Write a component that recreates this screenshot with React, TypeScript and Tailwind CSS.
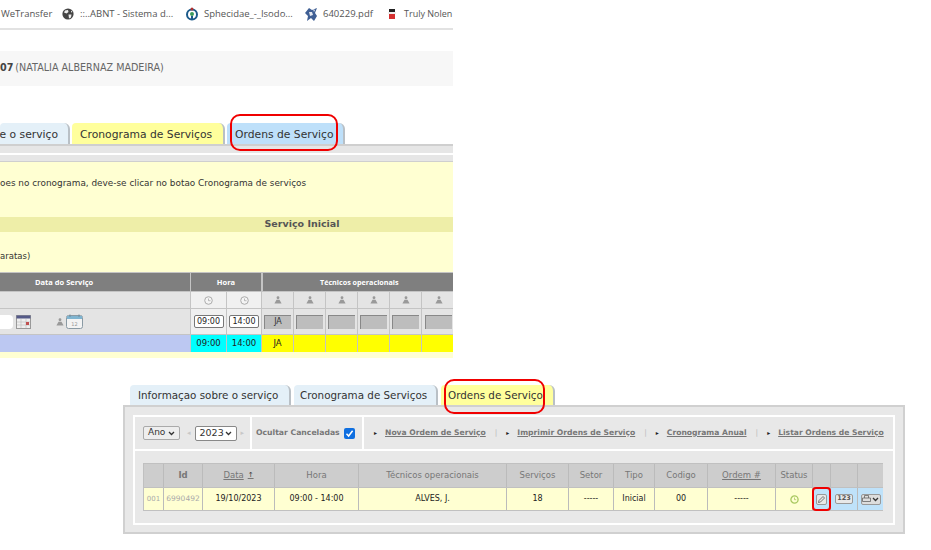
import type { ReactNode } from "react";

const verdana = "font-['DejaVu_Sans',sans-serif]";

const Globe = () => (
  <svg width="12" height="12" viewBox="0 0 12 12" className="shrink-0">
    <circle cx="6" cy="6" r="5.6" fill="#444" />
    <path d="M3 2.5 L6 2 L6.5 4 L4.5 5.5 L2 4.5 Z M6.5 6.5 L9.5 6.5 L9 9.5 L7 10.5 Z M9 2.5 L10.5 4 L9 4.5 Z" fill="#eee" />
  </svg>
);

const Wiki = () => (
  <svg width="14" height="14" viewBox="0 0 14 14" className="shrink-0">
    <circle cx="7" cy="7.5" r="5" fill="none" stroke="#1c5a8a" strokeWidth="2" />
    <circle cx="7" cy="7" r="2" fill="#3a9a5a" />
    <circle cx="7" cy="2" r="1.5" fill="#b03030" />
    <rect x="6" y="9" width="2" height="4" fill="#1c5a8a" />
  </svg>
);

const PdfIcon = () => (
  <svg width="14" height="15" viewBox="0 0 14 15" className="shrink-0">
    <path d="M1 6 L5 1 L8 3 L13 1 L11 6 L13 9 L10 14 L7 11 L3 14 L4 9 Z" fill="#3f5f94" />
    <path d="M5 5 L8 5 L9 8 L6 9 Z M9 2 L11 3 L10 5 Z" fill="#e4e8f0" />
  </svg>
);

const Truly = () => (
  <svg width="8" height="11" viewBox="0 0 8 11" className="shrink-0">
    <rect x="1" y="0" width="6" height="3" fill="#222" />
    <rect x="0" y="3" width="8" height="2" fill="#eee" />
    <rect x="1" y="5" width="6" height="5" fill="#d43030" />
  </svg>
);

const Clock = () => (
  <svg width="9" height="9" viewBox="0 0 9 9">
    <circle cx="4.5" cy="4.5" r="3.8" fill="#f4f4f4" stroke="#aaa" />
    <path d="M4.5 2.5 V4.7 H6.5" fill="none" stroke="#aaa" strokeWidth="0.8" />
  </svg>
);

const Person = ({ color = "#999" }: { color?: string }) => (
  <svg width="8" height="8" viewBox="0 0 9 9">
    <circle cx="4.5" cy="2" r="1.6" fill={color} />
    <path d="M2.8 4.2 H6.2 L8.5 8.5 H0.5 Z" fill={color} />
  </svg>
);

const Tab = ({ w, bg, children, className = "" }: { w: string; bg: string; children: ReactNode; className?: string }) => (
  <div className={`${w} ${bg} ${className} h-full shrink-0 rounded-tr-md rounded-tl-sm border-r-2 border-[#b9c0c6] flex items-center whitespace-nowrap overflow-hidden text-[#333]`}>
    {children}
  </div>
);

const techCells = [0, 1, 2, 3, 4, 5];

function TopBlock() {
  return (
    <div className={`w-[453px] overflow-hidden ${verdana}`}>
      <div className="h-[30px] border-b-2 border-[#e2e2e2] flex items-center font-['Open_Sans',sans-serif] text-[9.5px] text-[#555] whitespace-nowrap">
        <span className="ml-px w-[61px] shrink-0">WeTransfer</span>
        <Globe />
        <span className="ml-[6px] w-[105px] shrink-0">::..ABNT - Sistema d...</span>
        <Wiki />
        <span className="ml-[5px] w-[100px] shrink-0">Sphecidae_-_Isodo...</span>
        <PdfIcon />
        <span className="ml-[5px] w-[65px] shrink-0">640229.pdf</span>
        <Truly />
        <span className="ml-2 shrink-0 text-[9px]">Truly Nolen</span>
      </div>

      <div className="mt-[21px] h-[35px] bg-[#f7f7f7] flex items-center text-[9.6px] text-[#666]">
        <b className="text-[#444]">07</b>
        <span className="ml-[2px]">(NATALIA ALBERNAZ MADEIRA)</span>
      </div>

      <div className="mt-[37px] h-[21px] flex gap-[2px] text-[10.75px]">
        <Tab w="w-[70px]" bg="bg-[#e4f0f8]" className="justify-end pr-[10px] pt-[4px]">e o serviço</Tab>
        <Tab w="w-[153px]" bg="bg-[#ffff9c]" className="pl-2 pt-[4px]">Cronograma de Serviços</Tab>
        <Tab w="w-[118px]" bg="bg-[#bee0fa]" className="pl-2 pt-[4px]">Ordens de Serviço</Tab>
      </div>

      <div className="h-[18px] bg-[#e6e6e6] border-t-2 border-b border-[#cfcfcf] flex flex-col">
        <div className="h-[7px]" />
        <div className="h-[2px] bg-white" />
      </div>

      <div className="h-[196px] bg-[#ffffd2] text-[#333] text-[8.9px]">
        <div className="pt-[15px] h-[55px]">oes no cronograma, deve-se clicar no botao Cronograma de serviços</div>
        <div className="h-[15px] bg-[#eeeea8] flex items-center justify-center pl-[151px] text-[9.5px] font-bold text-[#555]">
          <span>Serviço Inicial</span>
        </div>
        <div className="pt-[18px] h-[40px] text-[8.5px]">aratas)</div>

        <div className="grid grid-cols-[190px_35px_34px_31px_31px_31px_31px_31px_33px] gap-x-px bg-[#c4c4c4] w-[453px] text-[8px] border-t border-[#c4c4c4]">
          <div className="h-[18px] pt-px bg-[#7f7f7f] text-white font-bold font-['Open_Sans',sans-serif] flex items-center pl-[35px] text-[7.5px]">Data do Serviço</div>
          <div className="col-span-2 h-[18px] pt-px bg-[#7f7f7f] text-white font-bold font-['Open_Sans',sans-serif] flex items-center justify-center text-[7.5px]">Hora</div>
          <div className="col-span-6 h-[18px] pt-px bg-[#7f7f7f] text-white font-bold font-['Open_Sans',sans-serif] flex items-center pl-[57px] text-[7.2px] border-l border-[#c4c4c4]">Técnicos operacionais</div>

          <div className="h-[16px] mt-px bg-[#e4e4e4]" />
          <div className="h-[16px] mt-px bg-[#f0f0f0] flex items-center justify-center"><Clock /></div>
          <div className="h-[16px] mt-px bg-[#f0f0f0] flex items-center justify-center"><Clock /></div>
          {techCells.map((c) => (
            <div key={c} className="h-[16px] mt-px bg-[#e4e4e4] flex items-center justify-center"><Person /></div>
          ))}

          <div className="h-[25px] mt-px bg-[#e4e4e4] flex items-center">
            <div className="w-[13px] h-[14px] bg-white rounded-r-sm" />
            <svg width="15" height="14" viewBox="0 0 15 14" className="ml-[3px]">
              <rect x="0.5" y="0.5" width="14" height="13" fill="#eee" stroke="#999" />
              <rect x="0.5" y="0.5" width="14" height="3" fill="#555a88" />
              <path d="M5 4 V13 M10 4 V13 M1 7 H14 M1 10 H14" stroke="#bbb" strokeWidth="0.6" />
              <rect x="10" y="7" width="3" height="3" fill="#c05050" />
            </svg>
            <span className="ml-[25px]"><Person /></span>
            <svg width="17" height="15" viewBox="0 0 17 15" className="ml-[2px]">
              <rect x="0.5" y="1.5" width="16" height="13" rx="2" fill="#f3f3f3" stroke="#8a9aa4" />
              <rect x="1" y="2" width="15" height="3" fill="#7fb4d0" />
              <path d="M4 0.5 V3 M13 0.5 V3" stroke="#6c8a9c" />
              <text x="8.5" y="11.5" fontSize="5" textAnchor="middle" fill="#999">12</text>
            </svg>
          </div>
          {["09:00", "14:00"].map((t) => (
            <div key={t} className="h-[25px] mt-px bg-[#f0f0f0] flex items-center justify-center">
              <div className="w-[30px] h-[13px] bg-white border border-[#777] rounded-[2px] flex items-center justify-center text-[8px] text-[#222]">{t}</div>
            </div>
          ))}
          {techCells.map((c) => (
            <div key={c} className="h-[25px] mt-px bg-[#e4e4e4] flex items-center justify-center">
              <div className="w-[27px] h-[14px] bg-[#bdbdbd] border-t border-l border-[#888] flex items-center justify-center text-[8px] text-[#333]">{c === 0 ? "JA" : ""}</div>
            </div>
          ))}

          <div className="h-[17px] mt-px bg-[#bcc8f2]" />
          {["09:00", "14:00"].map((t) => (
            <div key={t} className="h-[17px] mt-px bg-[#00ffff] flex items-center justify-center text-[8.5px] text-[#222]">{t}</div>
          ))}
          {techCells.map((c) => (
            <div key={c} className="h-[17px] mt-px bg-[#ffff00] flex items-center justify-center text-[8.5px] text-[#222]">{c === 0 ? "JA" : ""}</div>
          ))}
        </div>
      </div>
    </div>
  );
}

const orderCols = "grid-cols-[19px_39px_72px_84px_148px_62px_45px_41px_53px_68px_37px_18px_27px_26px]";

const headers: { label: string; link?: boolean }[] = [
  { label: "" },
  { label: "Id" },
  { label: "Data", link: true },
  { label: "Hora" },
  { label: "Técnicos operacionais" },
  { label: "Serviços" },
  { label: "Setor" },
  { label: "Tipo" },
  { label: "Codigo" },
  { label: "Ordem #", link: true },
  { label: "Status" },
  { label: "" },
  { label: "" },
  { label: "" },
];

const rowValues = ["19/10/2023", "09:00 - 14:00", "ALVES, J.", "18", "-----", "Inicial", "00", "-----"];

const toolbarLinks = ["Nova Ordem de Serviço", "Imprimir Ordens de Serviço", "Cronograma Anual", "Listar Ordens de Serviço"];

function BottomBlock() {
  return (
    <div className={`ml-[123px] w-[782px] ${verdana}`}>
      <div className="ml-[7px] h-[20px] flex gap-[3px] text-[10.35px]">
        <Tab w="w-[161px]" bg="bg-[#e4f0f8]" className="pl-2 pt-[2px]">Informaçao sobre o serviço</Tab>
        <Tab w="w-[144px]" bg="bg-[#e4f0f8]" className="pl-1.5 pt-[2px]">Cronograma de Serviços</Tab>
        <Tab w="w-[114px]" bg="bg-[#ffff9c]" className="pl-[7px] pt-[2px]">Ordens de Serviço</Tab>
      </div>
      <div className="h-[129px] bg-[#e8e8e8] border-2 border-[#d0d0d0] p-2 text-[#777]">
        <div className="border-2 border-white h-[110px] flex flex-col">
          <div className="h-[34px] flex border-b-2 border-white items-center text-[7.7px] font-bold">
            <div className="w-[117px] h-full border-r-2 border-white flex items-center pl-2">
              <div className="w-[37px] h-[14px] border border-[#aaa] bg-[#eee] rounded-[2px] flex items-center justify-between px-1 text-[9px] font-normal text-[#333]">Ano <ChevronDown /></div>
              <span className="ml-[7px] text-[#c8c8c8] text-[7px]">◂</span>
              <div className="ml-1 w-[42px] h-[15px] border border-[#888] bg-white rounded-[2px] flex items-center justify-between px-1 text-[9.5px] font-normal text-[#333]">2023 <ChevronDown /></div>
              <span className="ml-1 text-[#c8c8c8] text-[7px]">▸</span>
            </div>
            <div className="w-[112px] h-full border-r-2 border-white flex items-center pl-[4px]">
              <span className="whitespace-nowrap">Ocultar Canceladas</span>
              <div className="ml-1 w-[11px] h-[11px] bg-[#0f6fe0] rounded-[2px] flex items-center justify-center">
                <svg width="9" height="9" viewBox="0 0 9 9"><path d="M1.5 4.8 L3.6 7 L7.6 1.8" fill="none" stroke="white" strokeWidth="1.5" /></svg>
              </div>
            </div>
            <div className="flex items-center pl-[10px] text-[7.62px] whitespace-nowrap pb-px">
              {toolbarLinks.map((l, i) => (
                <div key={l} className="flex items-center">
                  {i > 0 && <span className="mx-[9px] text-[#bbb] font-normal">|</span>}
                  <span className="text-[#222] text-[6px] mr-[8px]">▸</span>
                  <span className="underline">{l}</span>
                </div>
              ))}
            </div>
          </div>

          <div className={`mt-[12px] ml-2 w-[740px] grid ${orderCols} bg-[#c0c0c0] gap-y-px text-[8.5px] border border-[#c0c0c0]`}>
            {headers.map((h, i) => (
              <div key={i} className={`h-[23px] bg-[#cdcdcd] flex items-center justify-center whitespace-nowrap ${i > 0 ? "border-l border-[#bbb]" : ""} ${h.link ? "underline" : ""} ${i === 1 ? "font-bold" : ""}`}>
                {h.label}
                {h.label === "Data" && <span className="ml-1 text-[#333] no-underline text-[7px]">↑</span>}
              </div>
            ))}
            <div className="h-[22px] bg-[#ffffd2] flex items-center justify-center text-[7px] text-[#aaa]">001</div>
            <div className="h-[22px] bg-[#ffffd2] border-l border-[#bbb] flex items-center justify-center text-[7.5px] text-[#aaa]">6990492</div>
            {rowValues.map((v, i) => (
              <div key={i} className="h-[22px] bg-[#ffffd2] border-l border-[#bbb] flex items-center justify-center text-[8px] text-[#222]">{v}</div>
            ))}
            <div className="h-[22px] bg-[#ffffd2] border-l border-[#bbb] flex items-center justify-center">
              <svg width="9" height="9" viewBox="0 0 9 9">
                <circle cx="4.5" cy="4.5" r="3.6" fill="none" stroke="#a8c860" strokeWidth="1.3" />
                <path d="M4.5 2.5 V4.7 H6.2" fill="none" stroke="#a8c860" strokeWidth="0.8" />
              </svg>
            </div>
            <div className="h-[22px] bg-[#bfe2fa] border-l border-[#bbb] flex items-center justify-center">
              <div className="w-[11px] h-[11px] border border-[#999] bg-[#e8e8e8] rounded-[2px] flex items-center justify-center">
                <svg width="9" height="9" viewBox="0 0 9 9"><path d="M1.5 7.5 L2 5.5 L6 1.5 L7.5 3 L3.5 7 Z" fill="none" stroke="#555" strokeWidth="0.8" /></svg>
              </div>
            </div>
            <div className="h-[22px] bg-[#bfe2fa] border-l border-[#bbb] flex items-center justify-center">
              <div className="w-[18px] h-[10px] border border-[#999] bg-[#e8e8e8] rounded-[2px] flex items-center justify-center text-[6.5px] font-bold text-[#555]">123</div>
            </div>
            <div className="h-[22px] bg-[#bfe2fa] border-l border-[#bbb] flex items-center justify-center">
              <div className="w-[20px] h-[11px] border border-[#999] bg-[#ddd] rounded-[2px] flex items-center justify-center gap-px">
                <svg width="9" height="8" viewBox="0 0 9 8"><path d="M2.5 3 V0.5 H6.5 V3 M0.5 3 H8.5 V6.5 H0.5 Z" fill="none" stroke="#666" strokeWidth="0.8" /></svg>
                <ChevronDown />
              </div>
            </div>
          </div>
        </div>
      </div>
    </div>
  );
}

function ChevronDown() {
  return (
    <svg width="7" height="5" viewBox="0 0 7 5" className="shrink-0">
      <path d="M1 1 L3.5 3.5 L6 1" fill="none" stroke="#333" strokeWidth="1.3" />
    </svg>
  );
}

const highlight = "absolute border-2 border-[#f00000] pointer-events-none";

export default function App() {
  return (
    <div className="relative w-[931px] h-[550px] bg-white overflow-hidden">
      <TopBlock />
      <div className="mt-[27px]">
        <BottomBlock />
      </div>
      <div className={`${highlight} left-[230px] top-[114px] w-[108px] h-[37px] rounded-[10px]`} />
      <div className={`${highlight} left-[444px] top-[379px] w-[101px] h-[35px] rounded-[10px]`} />
      <div className={`${highlight} left-[812px] top-[487px] w-[19px] h-[24px] rounded-[4px]`} />
    </div>
  );
}
